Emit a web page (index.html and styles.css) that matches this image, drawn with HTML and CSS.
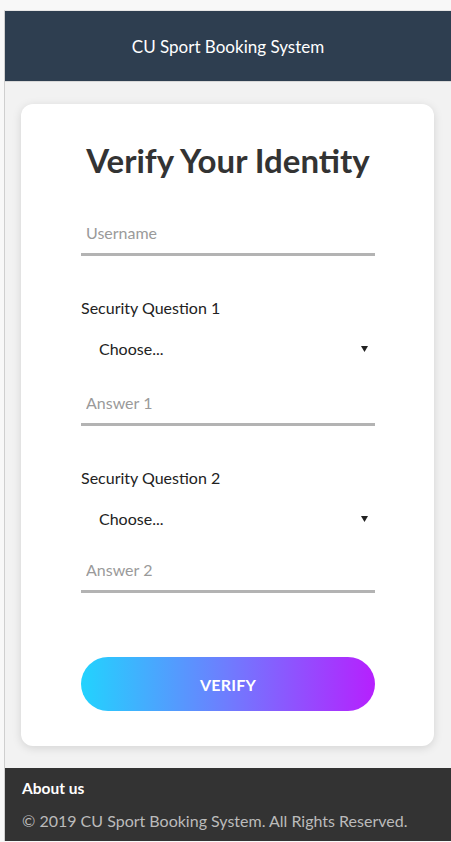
FILE: index.html
```html
<!DOCTYPE html>
<html lang="en">
<head>
<meta charset="utf-8">
<title>Verify Your Identity</title>
<link rel="stylesheet" href="styles.css">
</head>
<body>
<div class="frame">
  <header class="topbar">CU Sport Booking System</header>
  <main class="main">
    <form class="card">
      <h1 class="title">Verify Your Identity</h1>
      <input class="line-input first" type="text" placeholder="Username">
      <label class="label">Security Question 1</label>
      <div class="select-wrap">
        <select class="select"><option>Choose...</option></select>
        <svg class="arrow" width="7" height="6" viewBox="0 0 7 6"><path d="M0 0H7L3.5 6Z" fill="#222"/></svg>
      </div>
      <input class="line-input" type="text" placeholder="Answer 1">
      <label class="label">Security Question 2</label>
      <div class="select-wrap">
        <select class="select"><option>Choose...</option></select>
        <svg class="arrow" width="7" height="6" viewBox="0 0 7 6"><path d="M0 0H7L3.5 6Z" fill="#222"/></svg>
      </div>
      <input class="line-input last" type="text" placeholder="Answer 2">
      <button class="btn" type="button">VERIFY</button>
    </form>
  </main>
  <footer class="footer">
    <div class="about">About us</div>
    <div class="copy">© 2019 CU Sport Booking System. All Rights Reserved.</div>
  </footer>
</div>
</body>
</html>
```
FILE: styles.css
```css
* { box-sizing: border-box; }
html, body { margin: 0; padding: 0; }
body {
  background: #f8f8f8;
  font-family: Lato, "Open Sans", sans-serif;
  overflow: hidden;
}
.frame {
  margin-top: 10px;
  margin-left: 4px;
  border-left: 1px solid #cfcfcf;
  border-top: 1px solid #e6e6e6;
  background: #f2f2f2;
}
.topbar {
  height: 71px;
  background: #2e3e50;
  color: #fff;
  font-size: 17px;
  display: flex;
  align-items: center;
  justify-content: center;
  border-bottom: 1px solid #d8d8d8;
}
.main {
  padding: 22px 17px 22px 16px;
}
.card {
  background: #fff;
  border-radius: 12px;
  box-shadow: 0 2px 10px rgba(0,0,0,0.13);
  padding: 36px 59px 35px 60px;
  display: flex;
  flex-direction: column;
}
.title {
  margin: 0;
  text-align: center;
  font-size: 33px;
  line-height: 40px;
  font-weight: 700;
  color: #333;
}
.line-input {
  display: block;
  width: 100%;
  height: 44px;
  border: none;
  border-bottom: 3px solid #b3b3b3;
  padding: 0 5px;
  font-family: inherit;
  font-size: 16px;
  color: #333;
  background: transparent;
  outline: none;
  margin-top: 13px;
}
.line-input.first { margin-top: 32px; }
.line-input.last { margin-top: 10px; }
.line-input::placeholder { color: #9a9a9a; }
.label {
  display: block;
  margin-top: 42px;
  font-size: 16px;
  line-height: 20px;
  color: #222;
}
.select-wrap {
  position: relative;
  margin-top: 10px;
}
.select {
  -webkit-appearance: none;
  appearance: none;
  display: block;
  width: 100%;
  height: 41px;
  border: none;
  background: transparent;
  padding: 0 18px;
  font-family: inherit;
  font-size: 16px;
  color: #222;
  outline: none;
}
.arrow {
  position: absolute;
  right: 7px;
  top: 18px;
}
.btn {
  margin-top: 64px;
  height: 54px;
  border: none;
  border-radius: 27px;
  background: linear-gradient(90deg, #22d3fe 0%, #6f7cfe 50%, #b620fe 100%);
  color: #fff;
  font-family: inherit;
  font-size: 16px;
  font-weight: 700;
  letter-spacing: 0.2px;
  cursor: pointer;
}
.footer {
  background: #333;
  padding: 10px 17px 10px;
}
.about {
  color: #fff;
  font-size: 15.5px;
  font-weight: 700;
  line-height: 20px;
}
.copy {
  margin-top: 13px;
  color: #bbb;
  font-size: 16px;
  line-height: 20px;
}
```
